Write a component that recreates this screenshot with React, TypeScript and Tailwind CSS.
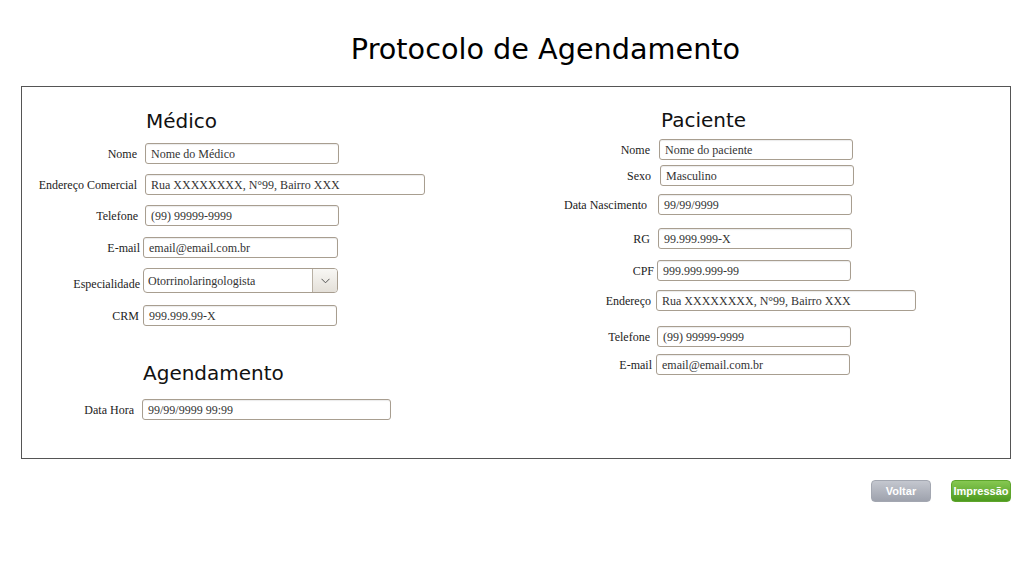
import React from "react";

type Field = {
  label: string;
  value: string;
  row: string;
  labelW: string;
  gap: string;
  inputW: string;
};

const medico: Field[] = [
  { label: "Nome", value: "Nome do Médico", row: "mt-[10px]", labelW: "w-[115px]", gap: "ml-[8px]", inputW: "w-[194px]" },
  { label: "Endereço Comercial", value: "Rua XXXXXXXX, N°99, Bairro XXX", row: "mt-[10px]", labelW: "w-[115px]", gap: "ml-[8px]", inputW: "w-[280px]" },
  { label: "Telefone", value: "(99) 99999-9999", row: "mt-[10px]", labelW: "w-[116px]", gap: "ml-[7px]", inputW: "w-[194px]" },
  { label: "E-mail", value: "email@email.com.br", row: "mt-[11px]", labelW: "w-[118px]", gap: "ml-[3px]", inputW: "w-[195px]" },
];

const paciente: Field[] = [
  { label: "Nome", value: "Nome do paciente", row: "mt-[7px]", labelW: "w-[110px]", gap: "ml-[9px]", inputW: "w-[194px]" },
  { label: "Sexo", value: "Masculino", row: "mt-[5px]", labelW: "w-[111px]", gap: "ml-[9px]", inputW: "w-[194px]" },
  { label: "Data Nascimento", value: "99/99/9999", row: "mt-[8px]", labelW: "w-[107px]", gap: "ml-[11px]", inputW: "w-[194px]" },
  { label: "RG", value: "99.999.999-X", row: "mt-[13px]", labelW: "w-[110px]", gap: "ml-[8px]", inputW: "w-[194px]" },
  { label: "CPF", value: "999.999.999-99", row: "mt-[11px]", labelW: "w-[114px]", gap: "ml-[3px]", inputW: "w-[194px]" },
  { label: "Endereço", value: "Rua XXXXXXXX, N°99, Bairro XXX", row: "mt-[9px]", labelW: "w-[111px]", gap: "ml-[5px]", inputW: "w-[260px]" },
  { label: "Telefone", value: "(99) 99999-9999", row: "mt-[15px]", labelW: "w-[110px]", gap: "ml-[7px]", inputW: "w-[194px]" },
  { label: "E-mail", value: "email@email.com.br", row: "mt-[7px]", labelW: "w-[112px]", gap: "ml-[4px]", inputW: "w-[194px]" },
];

const serif = "font-['Liberation_Serif',serif]";

const Input = ({ value, w }: { value: string; w: string }) => (
  <div className={`${w} h-[21px] flex items-center pl-[5px] border border-[#a89e90] rounded-[3px] bg-white text-[12px] text-[#333] ${serif} shadow-[inset_0_1px_1px_rgba(0,0,0,0.08)] whitespace-nowrap overflow-hidden`}>
    {value}
  </div>
);

const Row = ({ f }: { f: Field }) => (
  <div className={`flex items-center ${f.row}`}>
    <div className={`${f.labelW} shrink-0 text-right text-[12px] text-[#222] ${serif} whitespace-nowrap`}>{f.label}</div>
    <div className={f.gap}>
      <Input value={f.value} w={f.inputW} />
    </div>
  </div>
);

const Heading = ({ children, cls }: { children: React.ReactNode; cls: string }) => (
  <div className={`text-[20px] leading-[24px] text-[#111] font-['DejaVu_Sans',sans-serif] ${cls}`}>{children}</div>
);

export default function App() {
  return (
    <div className="w-[1036px] h-[563px] bg-white">
      <div className="pt-[31px] pl-[55px] text-center text-[28.7px] leading-[36px] text-black font-['DejaVu_Sans',sans-serif]">
        Protocolo de Agendamento
      </div>

      <div className="mt-[19px] ml-[21px] w-[990px] h-[373px] border border-[#555] flex">
        {/* medico + agendamento */}
        <div className="w-[518px] shrink-0">
          <Heading cls="mt-[22px] ml-[124px]">Médico</Heading>
          {medico.map(f => <Row key={f.label} f={f} />)}

          <div className="flex items-center mt-[10px]">
            <div className={`w-[118px] shrink-0 text-right text-[12px] text-[#222] ${serif} pt-[6px]`}>Especialidade</div>
            <div className="ml-[3px] w-[195px] h-[25px] flex border border-[#a89e90] rounded-[4px] bg-white overflow-hidden">
              <div className={`flex-1 flex items-center pl-[4px] text-[12px] text-[#333] ${serif}`}>Otorrinolaringologista</div>
              <div className="w-[25px] border-l border-[#b8b0a4] bg-gradient-to-b from-[#f8f7f4] to-[#e4e0d9] flex items-center justify-center">
                <svg width="9" height="6" viewBox="0 0 9 6" fill="none">
                  <path d="M0.5 0.8 L4.5 4.8 L8.5 0.8" stroke="#555" strokeWidth="1" />
                </svg>
              </div>
            </div>
          </div>

          <Row f={{ label: "CRM", value: "999.999.99-X", row: "mt-[12px]", labelW: "w-[117px]", gap: "ml-[4px]", inputW: "w-[194px]" }} />

          <Heading cls="mt-[35px] ml-[121px]">Agendamento</Heading>
          <Row f={{ label: "Data Hora", value: "99/99/9999 99:99", row: "mt-[14px]", labelW: "w-[112px]", gap: "ml-[8px]", inputW: "w-[249px]" }} />
        </div>

        {/* paciente */}
        <div className="flex-1">
          <Heading cls="mt-[21px] ml-[121px]">Paciente</Heading>
          {paciente.map(f => <Row key={f.label} f={f} />)}
        </div>
      </div>

      <div className="w-[1011px] mt-[21px] flex justify-end gap-[20px]">
        <button className="w-[60px] h-[22px] rounded-[4px] bg-gradient-to-b from-[#c4c7cf] to-[#9ea2ad] border border-[#a3a7b1] text-white text-[11px] font-bold font-['Liberation_Sans',sans-serif]">
          Voltar
        </button>
        <button className="w-[60px] h-[22px] rounded-[4px] bg-gradient-to-b from-[#86c851] to-[#4d9a1e] border border-[#5ea52c] text-white text-[11px] font-bold font-['Liberation_Sans',sans-serif]">
          Impressão
        </button>
      </div>
    </div>
  );
}
